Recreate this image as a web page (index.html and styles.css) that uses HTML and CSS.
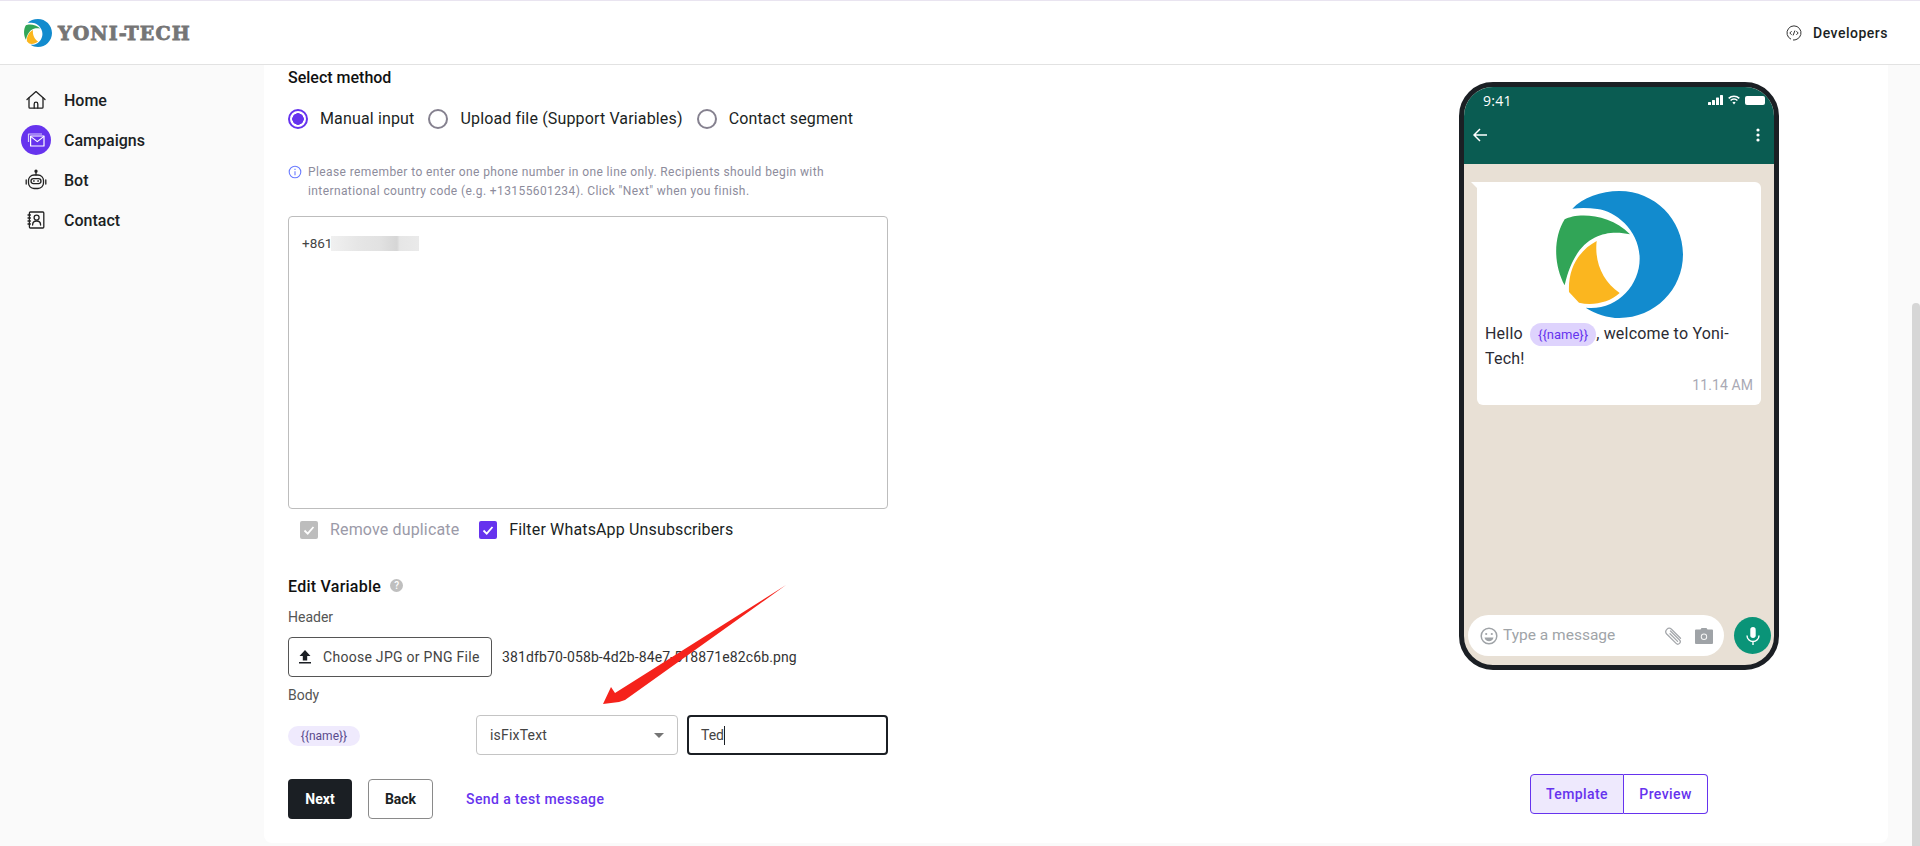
FILE: index.html
```html
<!DOCTYPE html>
<html lang="en">
<head>
<meta charset="utf-8">
<title>Yoni-Tech</title>
<link rel="stylesheet" href="styles.css">
</head>
<body>
<svg class="defs" width="0" height="0" aria-hidden="true">
  <symbol id="logo" viewBox="0 0 381 381">
    <path fill="#128bce" d="M49 53C80 20 135 0 190 0C296 0 381 85 381 190C381 296 296 381 190 381C155 381 118 368 89 350C180 360 251 285 251 203C251 120 180 60 124 54C98 50 72 50 49 53Z"/>
    <path fill="#31a557" d="M26 85C60 65 160 65 222 130C150 115 60 130 26 283C-8 220-8 140 26 85Z"/>
    <path fill="#fbb61f" d="M122 150C75 175 35 225 39 303L69 335C110 345 160 335 191 306C140 270 115 215 122 150Z"/>
  </symbol>
</svg>
<div class="app">
  <header class="topbar">
    <div class="brand">
      <svg class="brand-logo"><use href="#logo"/></svg>
      <span class="brand-name">YONI-TECH</span>
    </div>
    <div class="dev">
      <svg class="dev-icon" viewBox="0 0 16 16" fill="none" stroke="#333" stroke-width="1"><path d="M5 14.200A7 7 0 1 1 11 14.200"/><path d="M11 14.200A7 7 0 0 1 7 15"/><path d="M5.600 6.200 3.800 8l1.800 1.800M10.400 6.200 12.200 8l-1.800 1.800M8.900 5.600 7.100 10.400"/></svg>
      <span>Developers</span>
    </div>
  </header>
  <div class="body">
    <nav class="sidebar">
      <a class="nav-item">
        <span class="nav-icon"><svg viewBox="0 0 20 20" width="20" height="20" fill="none" stroke="#222" stroke-width="1.300" stroke-linejoin="round" stroke-linecap="round"><path d="M1 9.600 10 1.600l9 8"/><path d="M3 8v9.200a1 1 0 0 0 1 1h12a1 1 0 0 0 1-1V8"/><path d="M8.200 18v-4a1.800 1.800 0 0 1 3.600 0v4"/></svg></span>
        <span>Home</span>
      </a>
      <a class="nav-item">
        <span class="nav-icon nav-icon-on"><svg viewBox="0 0 20 20" width="20" height="20" fill="none" stroke="#fff" stroke-width="1.200" stroke-linejoin="round"><path d="M2.500 12V4h13.500" opacity=".75"/><rect x="4.600" y="6" width="13.400" height="10"/><path d="M4.600 6.400 11.300 11.600 18 6.400"/></svg></span>
        <span>Campaigns</span>
      </a>
      <a class="nav-item">
        <span class="nav-icon"><svg viewBox="0 0 22 22" width="22" height="22" fill="none" stroke="#222" stroke-width="1.300" stroke-linecap="round"><path d="M11 2.800v3"/><circle cx="11" cy="2.200" r="1" fill="#222"/><rect x="3.500" y="6" width="15" height="13.500" rx="5.500"/><rect x="6" y="9.600" width="10" height="5" rx="2.500"/><path d="M8.600 12h.6M12.800 12h.6M1.200 11v4M20.800 11v4"/></svg></span>
        <span>Bot</span>
      </a>
      <a class="nav-item">
        <span class="nav-icon"><svg viewBox="0 0 20 20" width="20" height="20" fill="none" stroke="#222" stroke-width="1.300" stroke-linecap="round"><rect x="3.400" y="2" width="14.400" height="16" rx="1"/><circle cx="10.600" cy="7.600" r="2.500"/><path d="M6.600 15c0-2.600 1.800-4 4-4s4 1.400 4 4"/><path d="M2 5h2.400M2 8h2.400M2 11h2.400M2 14h2.400"/></svg></span>
        <span>Contact</span>
      </a>
    </nav>
    <main class="main">
      <section class="card">
        <div class="form">
          <h2 class="title">Select method</h2>
          <div class="radios">
            <label class="radio"><span class="radio-dot radio-dot-on"></span>Manual input</label>
            <label class="radio"><span class="radio-dot"></span>Upload file (Support Variables)</label>
            <label class="radio"><span class="radio-dot"></span>Contact segment</label>
          </div>
          <div class="hint">
            <svg class="hint-icon" viewBox="0 0 14 14" fill="none" stroke="#6b7cff" stroke-width="1.100"><circle cx="7" cy="7" r="5.800"/><path d="M7 6.200v4M7 3.800v1.200"/></svg>
            <p>Please remember to enter one phone number in one line only. Recipients should begin with<br>international country code (e.g. +13155601234). Click "Next" when you finish.</p>
          </div>
          <div class="numbers">+861<span class="blur"></span></div>
          <div class="checks">
            <label class="check check-off"><span class="box box-off"><svg viewBox="0 0 18 18" fill="none" stroke="#fff" stroke-width="1.800"><path d="M4.500 9.500 7.700 12.600 13.500 6"/></svg></span>Remove duplicate</label>
            <label class="check"><span class="box box-on"><svg viewBox="0 0 18 18" fill="none" stroke="#fff" stroke-width="1.800"><path d="M4.500 9.500 7.700 12.600 13.500 6"/></svg></span>Filter WhatsApp Unsubscribers</label>
          </div>
          <h2 class="title title-var">Edit Variable <span class="help">?</span></h2>
          <div class="label label-header">Header</div>
          <div class="file-row">
            <button class="file-btn"><svg viewBox="0 0 12 14" width="12" height="14" fill="#1b1f24"><path d="M6 0 11.500 6H8.200v4.500H3.800V6H.5ZM0 12h12v1.600H0Z"/></svg>Choose JPG or PNG File</button>
            <span class="file-name">381dfb70-058b-4d2b-84e7-518871e82c6b.png</span>
          </div>
          <div class="label label-body">Body</div>
          <div class="var-row">
            <div class="var-name"><span class="chip">{{name}}</span></div>
            <div class="select">isFixText<span class="caret"></span></div>
            <div class="input">Ted<span class="cursor"></span></div>
          </div>
          <div class="actions">
            <button class="btn btn-dark">Next</button>
            <button class="btn btn-line">Back</button>
            <a class="test-link">Send a test message</a>
          </div>
        </div>
        <aside class="preview">
          <div class="phone">
            <div class="wa-head">
              <div class="status">
                <span class="clock">9:41</span>
                <span class="status-icons">
                  <svg viewBox="0 0 15 10" width="15" height="10" fill="#fff"><rect x="0" y="7" width="3" height="3" rx=".6"/><rect x="4" y="5" width="3" height="5" rx=".6"/><rect x="8" y="2.500" width="3" height="7.500" rx=".6"/><rect x="12" y="0" width="3" height="10" rx=".6"/></svg>
                  <svg viewBox="0 0 12 10" width="12" height="10" fill="none" stroke="#fff" stroke-width="1.500"><path d="M.7 3.400a7.500 7.500 0 0 1 10.600 0M2.600 5.500a4.800 4.800 0 0 1 6.800 0"/><path d="M4.400 7.500a2.300 2.300 0 0 1 3.200 0L6 9.500Z" fill="#fff" stroke="none"/></svg>
                  <span class="battery"></span>
                </span>
              </div>
              <div class="wa-nav">
                <svg viewBox="0 0 14 14" width="14" height="14" fill="none" stroke="#fff" stroke-width="1.500"><path d="M14 7H1M7 1 1 7l6 6"/></svg>
                <svg viewBox="0 0 4 14" width="4" height="14" fill="#fff"><circle cx="2" cy="2" r="1.600"/><circle cx="2" cy="7" r="1.600"/><circle cx="2" cy="12" r="1.600"/></svg>
              </div>
            </div>
            <div class="chat">
              <div class="bubble">
                <svg class="bubble-logo"><use href="#logo"/></svg>
                <p class="bubble-text">Hello <span class="bubble-chip">{{name}}</span>, welcome to Yoni-<br>Tech!</p>
                <div class="bubble-time">11.14 AM</div>
              </div>
              <div class="composer">
                <div class="composer-box">
                  <svg viewBox="0 0 18 18" width="18" height="18" fill="none" stroke="#9fa3a7" stroke-width="1.500"><circle cx="9" cy="9" r="7.800"/><circle cx="6.200" cy="7" r="1.100" fill="#9fa3a7" stroke="none"/><circle cx="11.800" cy="7" r="1.100" fill="#9fa3a7" stroke="none"/><path d="M4.500 10.500h9c-.5 2.500-2.300 3.800-4.500 3.800s-4-1.300-4.500-3.800Z" fill="#9fa3a7" stroke="none"/></svg>
                  <span class="placeholder">Type a message</span>
                  <svg class="clip" viewBox="0 0 18 18" width="18" height="18" fill="none" stroke="#a5a8ac" stroke-width="1.300" stroke-linecap="round"><path d="M6 4.500 15 13.500a2.400 2.400 0 0 1-3.400 3.400L2.200 7.500a3.400 3.400 0 0 1 4.800-4.800l9 9" transform="translate(-.5 -.5)"/><path d="M5 6.800l7.600 7.600"/></svg>
                  <svg viewBox="0 0 18 16" width="18" height="16" fill="#9fa3a7"><path d="M5.500 1.500 6.500 0h5l1 1.500H17a1 1 0 0 1 1 1V15a1 1 0 0 1-1 1H1a1 1 0 0 1-1-1V2.500a1 1 0 0 1 1-1Z"/><circle cx="9" cy="8.800" r="3.200" fill="#fff" opacity=".9"/><circle cx="9" cy="8.800" r="2.200" fill="#9fa3a7"/></svg>
                </div>
                <span class="mic"><svg viewBox="0 0 14 18" width="14" height="18" fill="none" stroke="#fff" stroke-width="1.400"><rect x="4.300" y="0" width="5.400" height="11" rx="2.700" fill="#fff" stroke="none"/><path d="M1 8.500a6 6 0 0 0 12 0M7 14.500V18"/></svg></span>
              </div>
            </div>
          </div>
          <div class="tabs">
            <button class="tab tab-on">Template</button>
            <button class="tab tab-second">Preview</button>
          </div>
        </aside>
      </section>
    </main>
  </div>
</div>
<svg class="arrow" viewBox="0 0 200 130" width="200" height="130"><polygon fill="#f5221b" points="186,1 25,116 19,118 3,120 11,103 15,109"/></svg>
<div class="thumb"></div>
</body>
</html>
```
FILE: styles.css
```css
* { box-sizing: border-box; }
html, body { margin: 0; height: 100%; overflow: hidden; }
body { font-family: Roboto, "Liberation Sans", sans-serif; color: #1b1f24; background: #fafafa; position: relative; }
.defs { position: absolute; }
p, h2 { margin: 0; }
button { font-family: inherit; cursor: pointer; }

.app { height: 846px; display: flex; flex-direction: column; }
.topbar { height: 65px; flex: none; background: #fff; border-top: 1px solid #e9e4f0; border-bottom: 1px solid #e2e2e2; display: flex; align-items: center; justify-content: space-between; padding: 0 32px 0 24px; }
.brand { display: flex; align-items: center; gap: 6px; }
.brand-logo { width: 28px; height: 28px; }
.brand-name { font-family: "DejaVu Serif", serif; font-weight: 700; font-size: 19px; letter-spacing: 1.100px; color: #757575; -webkit-text-stroke: .8px #757575; }
.dev { display: flex; align-items: center; gap: 11px; font-size: 14px; font-weight: 500; letter-spacing: .5px; }
.dev-icon { width: 16px; height: 16px; }

.body { flex: 1; display: flex; min-height: 0; }
.sidebar { width: 264px; flex: none; padding-top: 20px; display: flex; flex-direction: column; gap: 10px; }
.nav-item { height: 30px; display: flex; align-items: center; gap: 13px; padding-left: 21px; font-size: 16px; font-weight: 500; }
.nav-icon { width: 30px; height: 30px; display: flex; align-items: center; justify-content: center; border-radius: 50%; }
.nav-icon-on { background: #6633ee; }

.main { flex: 1; min-width: 0; padding: 0 32px 3px 0; display: flex; }
.card { flex: 1; background: #fff; border-radius: 0 0 8px 8px; padding: 3px 109px 0 24px; display: flex; justify-content: space-between; }
.form { width: 600px; }
.title { font-size: 16px; font-weight: 500; line-height: 20px; color: #111; }
.radios { margin-top: 21px; display: flex; gap: 14px; }
.radio { display: flex; align-items: center; gap: 12px; font-size: 16px; line-height: 20px; letter-spacing: .15px; }
.radio-dot { width: 20px; height: 20px; border-radius: 50%; border: 2px solid #85818f; flex: none; }
.radio-dot-on { border-color: #6633ee; background: radial-gradient(circle, #6633ee 0 5.500px, #fff 6px); }
.hint { margin-top: 34px; display: flex; gap: 6px; color: #8d8c9c; font-size: 12px; line-height: 19px; letter-spacing: .4px; }
.hint-icon { width: 14px; height: 14px; flex: none; margin-top: 2px; }
.numbers { margin-top: 15px; width: 600px; height: 293px; border: 1px solid #bdbdbd; border-radius: 4px; padding: 16px 13px; font-size: 13.500px; line-height: 20px; color: #444; }
.blur { display: inline-block; width: 88px; height: 15px; margin-left: -1px; vertical-align: -3px; background: linear-gradient(90deg, #f0f0f0, #e6e6e6 30%, #e2e2e2 55%, #d6d6d6 75%, #e6e6e6 78%, #eaeaea); }
.checks { margin-top: 12px; padding-left: 12px; display: flex; gap: 20px; }
.check { display: flex; align-items: center; gap: 12px; font-size: 16px; line-height: 18px; letter-spacing: .15px; }
.check-off { color: #9b9aa8; }
.box { width: 18px; height: 18px; border-radius: 2px; display: block; }
.box svg { display: block; }
.box-off { background: #bdbdbd; }
.box-on { background: #6633ee; }
.title-var { margin-top: 38px; letter-spacing: .25px; }
.help { display: inline-block; width: 13px; height: 13px; margin-left: 5px; border-radius: 50%; background: #bfbfbf; color: #fff; font-size: 10px; line-height: 13px; text-align: center; vertical-align: 3px; }
.label { font-size: 14px; line-height: 20px; color: #555; }
.label-header { margin-top: 10px; }
.label-body { margin-top: 8px; }
.file-row { margin-top: 10px; display: flex; align-items: center; gap: 10px; }
.file-btn { width: 204px; height: 40px; background: #fff; border: 1px solid #555; border-radius: 4px; padding: 0 0 0 10px; display: flex; align-items: center; gap: 12px; font-size: 14px; color: #444; letter-spacing: .28px; }
.file-name { font-size: 14px; color: #333; letter-spacing: .12px; }
.var-row { margin-top: 10px; display: flex; align-items: center; }
.var-name { width: 188px; flex: none; }
.chip { display: inline-block; width: 72px; height: 20px; border-radius: 10px; background: #efeafd; text-align: center; font-size: 12px; line-height: 20px; color: #5a4a8c; }
.select { width: 202px; height: 40px; border: 1px solid #c4c4c4; border-radius: 4px; padding: 0 13px; display: flex; align-items: center; justify-content: space-between; font-size: 14px; color: #444; letter-spacing: .2px; }
.caret { width: 0; height: 0; border-left: 5px solid transparent; border-right: 5px solid transparent; border-top: 5px solid #757575; }
.input { width: 201px; height: 40px; margin-left: 9px; border: 2px solid #1b1f24; border-radius: 4px; padding: 0 12px; display: flex; align-items: center; font-size: 14px; color: #444; }
.cursor { width: 1px; height: 19px; background: #1b1f24; }
.actions { margin-top: 24px; display: flex; align-items: center; }
.btn { height: 40px; border-radius: 4px; font-size: 14px; font-weight: 700; }
.btn-dark { width: 64px; background: #1b1f24; border: 0; color: #fff; }
.btn-line { width: 65px; margin-left: 16px; background: #fff; border: 1px solid #8a8a8a; color: #1b1f24; }
.test-link { margin-left: 33px; font-size: 14px; font-weight: 500; color: #6633ee; letter-spacing: .4px; }

.preview { width: 320px; flex: none; padding-top: 14px; display: flex; flex-direction: column; align-items: center; }
.phone { width: 320px; height: 588px; border: 5px solid #1b1f24; border-radius: 34px; overflow: hidden; display: flex; flex-direction: column; background: #e8e0d5; }
.wa-head { height: 77px; flex: none; background: #0a5c52; color: #fff; }
.status { height: 26px; display: flex; align-items: center; justify-content: space-between; padding: 0 9px 0 19px; }
.clock { font-family: "Open Sans", sans-serif; font-size: 14px; letter-spacing: .3px; font-weight: 500; }
.status-icons { display: flex; align-items: center; gap: 5px; }
.battery { width: 20px; height: 9px; background: #fff; border-radius: 2px; }
.wa-nav { margin-top: 15px; padding: 0 14px 0 9px; display: flex; align-items: center; justify-content: space-between; }
.chat { flex: 1; min-height: 0; padding-top: 18px; display: flex; flex-direction: column; position: relative; }
.bubble { position: relative; width: 284px; height: 223px; margin-left: 13px; background: #fff; border-radius: 0 6px 6px 6px; padding: 9px 8px 0; display: flex; flex-direction: column; }
.bubble::before { content: ""; position: absolute; left: -6px; top: 0; border-top: 6px solid #fff; border-left: 6px solid transparent; }
.bubble-logo { width: 127px; height: 127px; align-self: center; flex: none; }
.bubble-text { margin-top: 3px; font-size: 16px; line-height: 25px; letter-spacing: .2px; color: #2b2b33; }
.bubble-chip { display: inline-block; height: 23px; line-height: 23px; padding: 0 8px; margin-left: 3px; border-radius: 12px; background: #ded3fd; color: #6633ee; font-size: 13px; letter-spacing: 0; vertical-align: middle; }
.bubble-time { margin-top: 6px; text-align: right; font-size: 14px; line-height: 16px; letter-spacing: .1px; color: #a9a9b4; }
.composer { margin-top: auto; padding: 0 3px 9px 4px; display: flex; align-items: center; gap: 10px; }
.composer-box { width: 256px; height: 41px; flex: none; border-radius: 21px; background: #fff; padding: 0 11px 0 12px; display: flex; align-items: center; gap: 5px; }
.placeholder { flex: 1; font-size: 15.500px; color: #a0a4a8; padding-bottom: 2px; }
.clip { margin-right: 7px; }
.mic { width: 37px; height: 37px; border-radius: 50%; background: #0a9478; display: flex; align-items: center; justify-content: center; }
.tabs { margin-top: 104px; display: flex; }
.tab { height: 40px; background: #fff; border: 1.500px solid #6633ee; color: #6633ee; font-size: 14px; font-weight: 500; letter-spacing: .4px; }
.tab-on { width: 94px; background: #eee9fd; border-radius: 4px 0 0 4px; }
.tab-second { width: 84px; border-left: 0; border-radius: 0 4px 4px 0; }

.arrow { position: absolute; left: 600px; top: 584px; }
.thumb { position: absolute; right: 0; top: 303px; bottom: 0; width: 8px; background: #d6d6d6; border-radius: 4px 4px 0 0; }
```
